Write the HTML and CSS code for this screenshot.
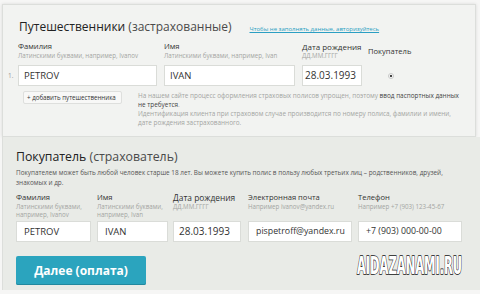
FILE: index.html
```html
<!DOCTYPE html>
<html lang="ru">
<head>
<meta charset="utf-8">
<link rel="stylesheet" href="styles.css">
</head>
<body>
<div class="page">
  <section class="travelers">
    <div class="head">
      <h2 class="title"><span class="strong">Путешественники</span> (застрахованные)</h2>
      <a class="login" href="#">Чтобы не заполнять данные, авторизуйтесь</a>
    </div>
    <div class="trow">
      <div class="num">1.</div>
      <div class="field f-fam">
        <div class="fhead">
          <div class="label">Фамилия</div>
          <div class="hint">Латинскими буквами, например, Ivanov</div>
        </div>
        <div class="input">PETROV</div>
      </div>
      <div class="field f-name">
        <div class="fhead">
          <div class="label">Имя</div>
          <div class="hint">Латинскими буквами, например, Ivan</div>
        </div>
        <div class="input">IVAN</div>
      </div>
      <div class="field f-date">
        <div class="fhead">
          <div class="label big">Дата рождения</div>
          <div class="hint">ДД.ММ.ГГГГ</div>
        </div>
        <div class="input date">28.03.1993</div>
      </div>
      <div class="field f-buyer">
        <div class="fhead buyer-head">
          <div class="label">Покупатель</div>
        </div>
        <div class="radio-cell"><span class="radio"></span></div>
      </div>
    </div>
    <div class="extra">
      <div class="add">+ добавить путешественника</div>
      <div class="info">
        <p>На нашем сайте процесс оформления страховых полисов упрощен, поэтому <b>ввод паспортных данных<br>не требуется</b>.</p>
        <p>Идентификация клиента при страховом случае производится по номеру полиса, фамилии и имени,<br>дате рождения застрахованного.</p>
      </div>
    </div>
  </section>
  <section class="buyer">
    <h2 class="title"><span class="strong">Покупатель</span> (страхователь)</h2>
    <p class="desc">Покупателем может быть любой человек старше 18 лет. Вы можете купить полис в пользу любых третьих лиц – родственников, друзей, знакомых и др.</p>
    <div class="brow">
      <div class="field b-fam">
        <div class="fhead">
          <div class="label">Фамилия</div>
          <div class="hint">Латинскими буквами, например, Ivanov</div>
        </div>
        <div class="input">PETROV</div>
      </div>
      <div class="field b-name">
        <div class="fhead">
          <div class="label">Имя</div>
          <div class="hint">Латинскими буквами, например, Ivan</div>
        </div>
        <div class="input">IVAN</div>
      </div>
      <div class="field b-date">
        <div class="fhead">
          <div class="label big">Дата рождения</div>
          <div class="hint">ДД.ММ.ГГГГ</div>
        </div>
        <div class="input date">28.03.1993</div>
      </div>
      <div class="field b-mail">
        <div class="fhead">
          <div class="label">Электронная почта</div>
          <div class="hint">Например ivanov@yandex.ru</div>
        </div>
        <div class="input wide">pispetroff@yandex.ru</div>
      </div>
      <div class="field b-phone">
        <div class="fhead">
          <div class="label">Телефон</div>
          <div class="hint">Например +7 (903) 123-45-67</div>
        </div>
        <div class="input wide">+7 (903) 000-00-00</div>
      </div>
    </div>
    <div class="actions">
      <button class="next">Далее (оплата)</button>
    </div>
  </section>
  <div class="watermark">AIDAZANAMI.RU</div>
</div>
</body>
</html>
```

FILE: styles.css
```css
* { box-sizing: border-box; }
html, body { margin: 0; padding: 0; }
body {
  font-family: "Open Sans", "Noto Sans", sans-serif;
  color: #333;
  background: #f6f6f5;
}
.page {
  position: relative;
  width: 480px;
  height: 294px;
  overflow: hidden;
  padding-top: 4px;
}
.travelers {
  margin: 0 4px 0 2px;
  height: 133px;
  background: #f2f3f1;
  border: 1px solid #dcdedb;
  box-shadow: 0 0 3px rgba(0,0,0,0.12);
  padding: 13px 0 0 4px;
}
.head {
  display: flex;
  align-items: baseline;
  padding-left: 12px;
}
.title {
  margin: 0;
  font-size: 12.3px;
  line-height: 18px;
  font-weight: 400;
  color: #4a4a4a;
  white-space: nowrap;
}
.head .title { font-size: 12px; }
.title .strong { color: #222; font-weight: 500; }
.login {
  margin-left: 18px;
  font-size: 6px;
  color: #2b9fc3;
  text-decoration: underline;
  white-space: nowrap;
}
.trow {
  display: flex;
  margin-top: 5px;
}
.num {
  width: 11px;
  padding-top: 24px;
  font-size: 6.5px;
  line-height: 21px;
  color: #999;
  padding-left: 1px;
}
.field { display: flex; flex-direction: column; }
.fhead { height: 24px; }
.label {
  font-size: 7.6px;
  line-height: 11px;
  color: #333;
  white-space: nowrap;
}
.label.big { font-size: 8px; }
.hint {
  font-size: 6.2px;
  line-height: 8px;
  color: #a3a5a2;
}
.input {
  height: 21px;
  background: #fff;
  border: 1px solid #dadcd8;
  font-size: 9.5px;
  line-height: 19px;
  padding-left: 5px;
  color: #333;
  white-space: nowrap;
  overflow: hidden;
}
.input.date { font-size: 10px; padding-left: 2px; }
.f-fam { width: 139px; }
.f-name { width: 131px; margin-left: 7px; }
.f-date { width: 60px; margin-left: 7px; }
.f-buyer { width: 60px; margin-left: 6px; }
.buyer-head .label { padding-top: 5px; }
.radio-cell { height: 21px; display: flex; align-items: center; padding-left: 20px; }
.radio {
  width: 6px;
  height: 6px;
  border-radius: 50%;
  border: 1px solid #c8c8c8;
  background: radial-gradient(circle, #444 0 1.3px, #fff 1.6px);
}
.extra {
  display: flex;
  margin-top: 5px;
}
.add {
  margin-left: 16px;
  width: 99px;
  height: 13px;
  border: 1px solid #dedfdd;
  border-radius: 2px;
  background: #f8f8f7;
  font-size: 6.2px;
  line-height: 11px;
  padding-left: 3px;
  color: #333;
  white-space: nowrap;
}
.info {
  margin-left: 16px;
  width: 330px;
  font-size: 6.4px;
  line-height: 9px;
  color: #a3a5a2;
  white-space: nowrap;
}
.info p { margin: 0; }
.info b { font-weight: 400; color: #444; }
.buyer {
  margin-left: 2px;
  height: 153px;
  background: #e9ebe7;
  border-left: 1px solid #dcdedb;
  padding: 11px 0 0 13px;
}
.desc {
  margin: 2px 0 0;
  width: 440px;
  font-size: 6.4px;
  line-height: 9.5px;
  color: #555;
}
.brow {
  display: flex;
  margin-top: 5px;
}
.brow .fhead { height: 29px; }
.brow .hint { width: 74px; }
.b-fam { width: 75px; }
.b-name { width: 71px; margin-left: 6px; }
.b-date { width: 68px; margin-left: 5px; }
.b-mail { width: 104px; margin-left: 7px; }
.b-phone { width: 104px; margin-left: 6px; }
.b-mail .hint, .b-phone .hint { width: auto; white-space: nowrap; }
.brow .label.big { font-size: 8.4px; }
.brow .input { padding-left: 7px; }
.brow .input.date { padding-left: 5px; font-size: 10px; }
.input.wide { font-size: 8.8px; }
.actions { margin-top: 14px; }
.next {
  width: 130px;
  height: 29px;
  border: 0;
  border-radius: 2px;
  background: #2ba4be;
  box-shadow: inset 0 -1px 0 #22889e;
  color: #fff;
  font-family: "Open Sans", "Noto Sans", sans-serif;
  font-weight: 700;
  font-size: 12px;
  padding: 0;
}
.watermark {
  position: absolute;
  left: 357px;
  top: 252px;
  font-family: "Liberation Sans Narrow", "DejaVu Sans Condensed", sans-serif;
  font-weight: 700;
  font-size: 24px;
  line-height: 28px;
  color: #fff;
  -webkit-text-stroke: 1.4px #111;
  paint-order: stroke fill;
  transform: scaleX(0.53);
  transform-origin: left top;
  white-space: nowrap;
}
```
